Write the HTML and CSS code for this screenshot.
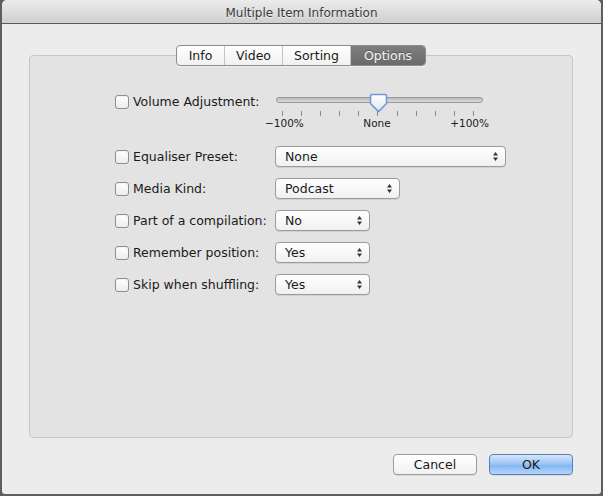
FILE: index.html
```html
<!DOCTYPE html>
<html>
<head>
<meta charset="utf-8">
<link rel="stylesheet" href="styles.css">
</head>
<body>
<div class="window">
  <div class="titlebar">Multiple Item Information</div>
  <div class="content">
    <div class="panel">
      <div class="tabs">
        <div class="tab t-info">Info</div>
        <div class="tab t-video">Video</div>
        <div class="tab t-sorting">Sorting</div>
        <div class="tab t-options selected">Options</div>
      </div>
      <div class="form">
        <div class="row vol-row">
          <label class="lbl"><span class="cb"></span>Volume Adjustment:</label>
          <div class="slider">
            <div class="track"></div>
            <svg class="knob" width="19" height="20" viewBox="0 0 19 20">
              <defs>
                <linearGradient id="kg" x1="0" y1="0" x2="0" y2="1">
                  <stop offset="0" stop-color="#ffffff"/>
                  <stop offset="1" stop-color="#dfe6ef"/>
                </linearGradient>
              </defs>
              <path d="M3 1.5 H16 Q17.5 1.5 17.5 3 V10.5 L9.5 18.5 L1.5 10.5 V3 Q1.5 1.5 3 1.5 Z" fill="url(#kg)" stroke="#6c9bd6" stroke-width="1.6"/>
            </svg>
            <div class="ticks">
              <i></i><i></i><i></i><i></i><i></i><i></i><i></i><i></i><i></i><i></i><i></i>
            </div>
            <div class="scale">
              <span>−100%</span><span>None</span><span>+100%</span>
            </div>
          </div>
        </div>
        <div class="row">
          <label class="lbl"><span class="cb"></span>Equaliser Preset:</label>
          <div class="popup w-eq"><span>None</span><svg class="arr" width="7" height="11" viewBox="0 0 7 11"><path d="M3.5 1 L6 4.5 H1 Z M3.5 10 L6 6.5 H1 Z" fill="#333"/></svg></div>
        </div>
        <div class="row">
          <label class="lbl"><span class="cb"></span>Media Kind:</label>
          <div class="popup w-kind"><span>Podcast</span><svg class="arr" width="7" height="11" viewBox="0 0 7 11"><path d="M3.5 1 L6 4.5 H1 Z M3.5 10 L6 6.5 H1 Z" fill="#333"/></svg></div>
        </div>
        <div class="row">
          <label class="lbl"><span class="cb"></span>Part of a compilation:</label>
          <div class="popup w-small"><span>No</span><svg class="arr" width="7" height="11" viewBox="0 0 7 11"><path d="M3.5 1 L6 4.5 H1 Z M3.5 10 L6 6.5 H1 Z" fill="#333"/></svg></div>
        </div>
        <div class="row">
          <label class="lbl"><span class="cb"></span>Remember position:</label>
          <div class="popup w-small"><span>Yes</span><svg class="arr" width="7" height="11" viewBox="0 0 7 11"><path d="M3.5 1 L6 4.5 H1 Z M3.5 10 L6 6.5 H1 Z" fill="#333"/></svg></div>
        </div>
        <div class="row">
          <label class="lbl"><span class="cb"></span>Skip when shuffling:</label>
          <div class="popup w-small"><span>Yes</span><svg class="arr" width="7" height="11" viewBox="0 0 7 11"><path d="M3.5 1 L6 4.5 H1 Z M3.5 10 L6 6.5 H1 Z" fill="#333"/></svg></div>
        </div>
      </div>
    </div>
    <div class="buttons">
      <div class="btn cancel">Cancel</div>
      <div class="btn ok">OK</div>
    </div>
  </div>
</div>
</body>
</html>
```
FILE: styles.css
```css
html, body {
  margin: 0;
  padding: 0;
}
body {
  background: #5e5e5e;
  width: 603px;
  height: 496px;
  overflow: hidden;
  font-family: "DejaVu Sans", "Liberation Sans", sans-serif;
  font-size: 12px;
  color: #1a1a1a;
}
.window {
  margin-left: 2px;
  width: 599px;
  height: 494px;
  background: #ececec;
  border-radius: 5px 5px 3px 3px;
  overflow: hidden;
}
.titlebar {
  height: 23px;
  line-height: 26px;
  text-align: center;
  font-size: 12px;
  color: #3a3a3a;
  text-shadow: 0 1px 0 rgba(255,255,255,0.6);
  background: linear-gradient(#ececec, #cfcfcf);
  border-bottom: 1px solid #5a5a5a;
}
.content {
  padding: 31px 28px 0 27px;
}
.panel {
  height: 381px;
  background: #e3e3e3;
  border: 1px solid #c6c6c6;
  border-radius: 4px;
}
.tabs {
  display: flex;
  width: 248px;
  height: 19px;
  margin: -11px auto 0;
  border: 1px solid #8c8c8c;
  border-radius: 4px;
  background: linear-gradient(#ffffff, #f1f1f1);
  box-shadow: 0 1px 0 rgba(255,255,255,0.5);
  overflow: hidden;
}
.tab {
  font-size: 12.5px;
  line-height: 19px;
  text-align: center;
  color: #1a1a1a;
  border-right: 1px solid #c4c4c4;
}
.t-info { width: 47px; }
.t-video { width: 57px; }
.t-sorting { width: 67px; }
.t-options {
  flex: 1;
  border-right: none;
}
.tab.selected {
  color: #f4f4f4;
  background: linear-gradient(#7e7e7e, #6a6a6a);
  text-shadow: 0 -1px 0 rgba(0,0,0,0.3);
}
.form {
  padding: 25px 0 0 85px;
  display: flex;
  flex-direction: column;
  gap: 11px;
}
.row {
  display: flex;
  align-items: center;
  height: 21px;
}
.vol-row {
  align-items: flex-start;
  height: 46px;
  margin-bottom: -2px;
}
.vol-row .lbl {
  height: 21px;
}
.lbl {
  width: 160px;
  display: flex;
  align-items: center;
  gap: 4px;
  font-size: 12.5px;
  color: #1a1a1a;
  white-space: nowrap;
}
.cb {
  width: 12px;
  height: 12px;
  border: 1px solid #8e8e8e;
  border-radius: 3px;
  background: linear-gradient(#ffffff, #ececec);
  box-shadow: inset 0 1px 1px rgba(0,0,0,0.05);
  flex: none;
}
.slider {
  position: relative;
  width: 230px;
  margin-left: -10px;
  height: 46px;
}
.track {
  position: absolute;
  left: 11px;
  top: 6px;
  width: 205px;
  height: 4px;
  border: 1px solid #9a9a9a;
  border-radius: 3px;
  background: linear-gradient(#b9b9b9, #dedede);
}
.knob {
  position: absolute;
  left: 104px;
  top: 2px;
}
.ticks {
  position: absolute;
  left: 17px;
  top: 20px;
  width: 192px;
  display: flex;
  justify-content: space-between;
}
.ticks i {
  display: block;
  width: 1px;
  height: 5px;
  background: #8a8a8a;
}
.scale {
  position: absolute;
  left: 0;
  top: 26px;
  width: 224px;
  display: flex;
  justify-content: space-between;
  font-size: 10.5px;
  color: #1a1a1a;
}
.popup {
  box-sizing: border-box;
  height: 21px;
  border: 1px solid #9b9b9b;
  border-radius: 4px;
  background: linear-gradient(#ffffff, #f0f0f0);
  box-shadow: 0 1px 0 rgba(0,0,0,0.08);
  display: flex;
  align-items: center;
  justify-content: space-between;
  padding: 0 6px 0 9px;
  font-size: 12.5px;
  color: #1a1a1a;
}
.w-eq { width: 231px; }
.w-kind { width: 125px; }
.w-small { width: 95px; }
.buttons {
  display: flex;
  justify-content: flex-end;
  gap: 12px;
  padding-top: 16px;
}
.btn {
  box-sizing: border-box;
  width: 84px;
  height: 21px;
  border-radius: 4px;
  text-align: center;
  line-height: 19px;
  font-size: 12.5px;
  color: #1a1a1a;
}
.cancel {
  border: 1px solid #9b9b9b;
  background: linear-gradient(#ffffff, #f1f1f1);
  box-shadow: 0 1px 0 rgba(0,0,0,0.08);
}
.ok {
  border: 1px solid #5a7fb8;
  background: linear-gradient(#d4e6fb, #99c2f3 50%, #7fb3f0 51%, #b5d6fb);
  box-shadow: 0 1px 0 rgba(0,0,0,0.08);
}
```
